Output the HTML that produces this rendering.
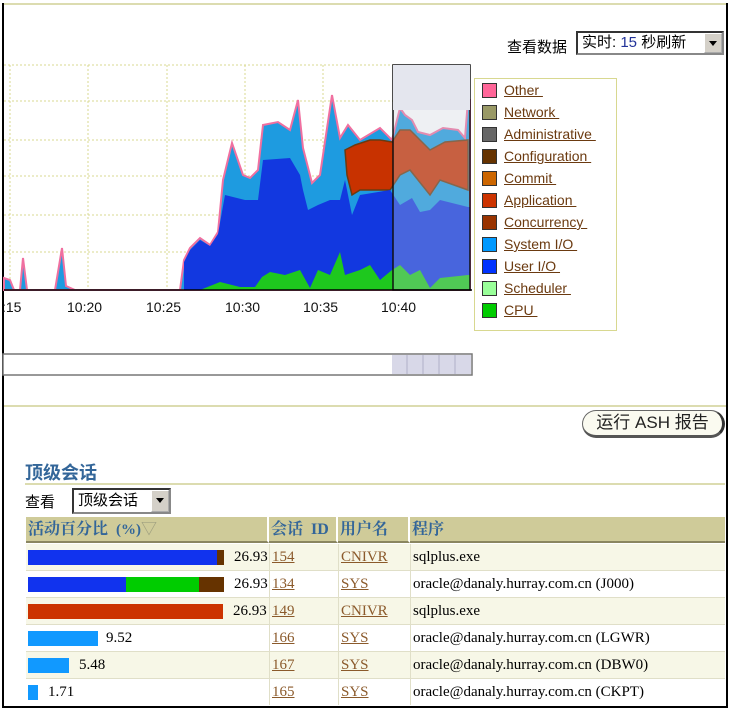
<!DOCTYPE html>
<html><head><meta charset="utf-8"><style>
*{margin:0;padding:0;box-sizing:border-box}
body{width:734px;height:713px;background:#fff;position:relative;overflow:hidden;font-family:"Liberation Sans","Noto Sans CJK SC",sans-serif}
.a{position:absolute}
.sel{position:absolute;border:2px inset #888;background:#fff;font-size:15px;line-height:19px;padding-left:4px;color:#000}
.sel .btn{position:absolute;right:0;top:0;width:18px;height:100%;background:#d4d0c8;border:1px outset #fff}
.sel .btn:after{content:"";position:absolute;left:4px;top:7px;border:4px solid transparent;border-top:5px solid #000}
.lg{position:absolute;left:482px;font-size:14px;color:#6b3a10;line-height:16px}
.lg i{position:absolute;left:0;top:1px;width:15px;height:15px;border:1px solid #333}
.lg span{position:absolute;left:22px;top:0;white-space:pre;text-decoration:underline}
.hd{position:absolute;top:517px;height:26px;background:#cfcb99;color:#336699;font-weight:bold;font-family:"Liberation Serif","Noto Serif CJK SC",serif;font-size:16px;line-height:26px;padding-left:2px;border-right:2px solid #fff;border-bottom:2px solid #8a8660}
.row{position:absolute;left:26px;width:699px;height:27px;border-bottom:1px solid #e0dfc8}
.c{position:absolute;top:0;height:26px;line-height:26px;font-family:"Liberation Serif",serif;font-size:15px;border-left:1px solid #e0dfc8}
.u{color:#8b5a2b;text-decoration:underline}
.bar{position:absolute;top:6px;height:15px}
.v{position:absolute;top:0;line-height:26px;font-family:"Liberation Serif",serif;font-size:15px}
</style></head><body>
<div class="a" style="left:2px;top:3px;width:726px;height:705px;border-left:2px solid #000;border-right:2px solid #000;border-bottom:2px solid #000"></div>
<div class="a" style="left:4px;top:3px;width:722px;height:2px;background:#dcdcb0"></div>

<div class="a" style="left:507px;top:36px;font-size:15px">查看数据</div>
<div class="sel" style="left:576px;top:31px;width:148px;height:24px">实时: <span style="color:#223399">15</span> 秒刷新<div class="btn"></div></div>

<svg class="a" style="left:0;top:0" width="480" height="380">
<g stroke="#d8d890" stroke-width="1" stroke-dasharray="2,2">
<line x1="4" y1="65" x2="470" y2="65"/><line x1="4" y1="101" x2="470" y2="101"/><line x1="4" y1="140" x2="470" y2="140"/><line x1="4" y1="176" x2="470" y2="176"/><line x1="4" y1="215" x2="470" y2="215"/><line x1="4" y1="252" x2="470" y2="252"/>
<line x1="10" y1="65" x2="10" y2="290"/><line x1="88" y1="65" x2="88" y2="290"/><line x1="167" y1="65" x2="167" y2="290"/><line x1="245" y1="65" x2="245" y2="290"/><line x1="323" y1="65" x2="323" y2="290"/><line x1="401" y1="65" x2="401" y2="290"/>
</g>
<polygon fill="#1e9be0" stroke="#f070a0" stroke-width="2" points="4,290 4,278 10,280 14,290 20,290 23,258 27,290 55,290 62,248 66,286 75,290 180,290 184,260 190,248 200,238 210,245 218,232 223,180 232,143 243,175 250,178 258,170 263,125 278,122 290,130 298,100 303,148 312,183 320,175 332,95 340,138 348,125 360,140 380,128 392,140 400,108 405,115 412,120 418,132 430,135 443,128 458,130 465,138 468,100 470,100 470,290"/>
<polygon fill="#c83200" stroke="#6b3a10" stroke-width="1.5" points="345,150 355,145 370,140 380,140 392,142 400,130 410,130 430,150 445,142 468,140 468,190 440,180 430,195 410,170 400,175 390,190 360,190 352,195 347,175"/>
<polygon fill="#1238e0" points="184,290 184,262 190,250 200,240 210,246 218,234 225,195 245,200 258,200 263,160 290,158 300,175 303,190 308,210 318,205 330,200 340,200 345,180 352,215 360,195 390,190 400,205 412,198 420,212 430,210 440,200 468,207 470,207 470,290"/>
<polygon fill="#1ec81e" points="200,290 220,282 240,287 255,287 262,277 270,272 285,275 300,270 310,288 318,270 330,275 340,252 345,275 360,270 370,265 380,280 392,270 400,265 410,275 420,270 430,288 440,278 468,275 470,275 470,290"/>
<rect x="393" y="65" width="77" height="225" fill="#c8ccd8" fill-opacity=".3" stroke="#111" stroke-width="1.5"/>
<rect x="393" y="65" width="77" height="45" fill="#e4e6ee"/>
<line x1="4" y1="290" x2="472" y2="290" stroke="#000" stroke-width="1.5"/>
<g font-family="Liberation Sans,sans-serif" font-size="14" fill="#111">
<text x="2" y="312">:15</text><text x="67" y="312">10:20</text><text x="146" y="312">10:25</text><text x="225" y="312">10:30</text><text x="303" y="312">10:35</text><text x="381" y="312">10:40</text>
</g>
<rect x="3" y="354" width="469" height="21" fill="#fff" stroke="#777" stroke-width="1.5"/>
<rect x="392" y="355" width="79" height="19" fill="#d8d8e8"/>
<g stroke="#b0b0c8"><line x1="407" y1="355" x2="407" y2="374"/><line x1="423" y1="355" x2="423" y2="374"/><line x1="439" y1="355" x2="439" y2="374"/><line x1="455" y1="355" x2="455" y2="374"/></g>
</svg>

<div class="a" style="left:474px;top:78px;width:143px;height:253px;border:1px solid #d8d890"></div>
<div class="lg" style="top:82px"><i style="background:#ff6699"></i><span>Other </span></div>
<div class="lg" style="top:104px"><i style="background:#999966"></i><span>Network </span></div>
<div class="lg" style="top:126px"><i style="background:#666666"></i><span>Administrative </span></div>
<div class="lg" style="top:148px"><i style="background:#663300"></i><span>Configuration </span></div>
<div class="lg" style="top:170px"><i style="background:#cc6600"></i><span>Commit </span></div>
<div class="lg" style="top:192px"><i style="background:#cc3300"></i><span>Application </span></div>
<div class="lg" style="top:214px"><i style="background:#993300"></i><span>Concurrency </span></div>
<div class="lg" style="top:236px"><i style="background:#0099ff"></i><span>System I/O </span></div>
<div class="lg" style="top:258px"><i style="background:#0033ff"></i><span>User I/O </span></div>
<div class="lg" style="top:280px"><i style="background:#99ff99"></i><span>Scheduler </span></div>
<div class="lg" style="top:302px"><i style="background:#00cc00"></i><span>CPU </span></div>

<div class="a" style="left:4px;top:405px;width:722px;height:2px;background:#dcdcb0"></div>
<div class="a" style="left:582px;top:410px;width:143px;height:28px;border:1px solid #666;border-right:3px solid #333;border-bottom:3px solid #555;border-radius:14px;background:#fafaf0;font-size:17px;line-height:24px;text-align:center;color:#222">运行 ASH 报告</div>

<div class="a" style="left:25px;top:459px;font-size:18px;font-weight:bold;color:#336699">顶级会话</div>
<div class="a" style="left:25px;top:483px;width:700px;height:2px;background:#dcdcb0"></div>
<div class="a" style="left:25px;top:491px;font-size:15px">查看</div>
<div class="sel" style="left:72px;top:488px;width:99px;height:26px;line-height:22px">顶级会话<div class="btn"></div></div>

<div class="hd" style="left:26px;width:243px">活动百分比 &nbsp;<span style="font-weight:bold;font-size:15px">(%)</span><span style="color:#a0a080;font-weight:normal">▽</span></div>
<div class="hd" style="left:269px;width:69px">会话 &nbsp;ID</div>
<div class="hd" style="left:338px;width:72px">用户名</div>
<div class="hd" style="left:410px;width:315px;border-right:none">程序</div>

<div class="row" style="top:544px;background:#f7f7e7"><div class="bar" style="left:2px;width:189px;background:#1133ee"></div><div class="bar" style="left:191px;width:7px;background:#663300"></div><div class="v" style="left:208px">26.93</div><div class="c" style="left:243px"><span class="u" style="margin-left:2px">154</span></div><div class="c" style="left:312px"><span class="u" style="margin-left:2px">CNIVR</span></div><div class="c" style="left:384px;padding-left:2px">sqlplus.exe</div></div>
<div class="row" style="top:571px;background:#fff"><div class="bar" style="left:2px;width:98px;background:#1133ee"></div><div class="bar" style="left:100px;width:73px;background:#00cc00"></div><div class="bar" style="left:173px;width:25px;background:#663300"></div><div class="v" style="left:208px">26.93</div><div class="c" style="left:243px"><span class="u" style="margin-left:2px">134</span></div><div class="c" style="left:312px"><span class="u" style="margin-left:2px">SYS</span></div><div class="c" style="left:384px;padding-left:2px">oracle@danaly.hurray.com.cn (J000)</div></div>
<div class="row" style="top:598px;background:#f7f7e7"><div class="bar" style="left:2px;width:195px;background:#cc3300"></div><div class="v" style="left:207px">26.93</div><div class="c" style="left:243px"><span class="u" style="margin-left:2px">149</span></div><div class="c" style="left:312px"><span class="u" style="margin-left:2px">CNIVR</span></div><div class="c" style="left:384px;padding-left:2px">sqlplus.exe</div></div>
<div class="row" style="top:625px;background:#fff"><div class="bar" style="left:2px;width:70px;background:#1199ff"></div><div class="v" style="left:80px">9.52</div><div class="c" style="left:243px"><span class="u" style="margin-left:2px">166</span></div><div class="c" style="left:312px"><span class="u" style="margin-left:2px">SYS</span></div><div class="c" style="left:384px;padding-left:2px">oracle@danaly.hurray.com.cn (LGWR)</div></div>
<div class="row" style="top:652px;background:#f7f7e7"><div class="bar" style="left:2px;width:41px;background:#1199ff"></div><div class="v" style="left:53px">5.48</div><div class="c" style="left:243px"><span class="u" style="margin-left:2px">167</span></div><div class="c" style="left:312px"><span class="u" style="margin-left:2px">SYS</span></div><div class="c" style="left:384px;padding-left:2px">oracle@danaly.hurray.com.cn (DBW0)</div></div>
<div class="row" style="top:679px;background:#fff;border-bottom:none"><div class="bar" style="left:2px;width:10px;background:#1199ff"></div><div class="v" style="left:22px">1.71</div><div class="c" style="left:243px"><span class="u" style="margin-left:2px">165</span></div><div class="c" style="left:312px"><span class="u" style="margin-left:2px">SYS</span></div><div class="c" style="left:384px;padding-left:2px">oracle@danaly.hurray.com.cn (CKPT)</div></div>
</body></html>
